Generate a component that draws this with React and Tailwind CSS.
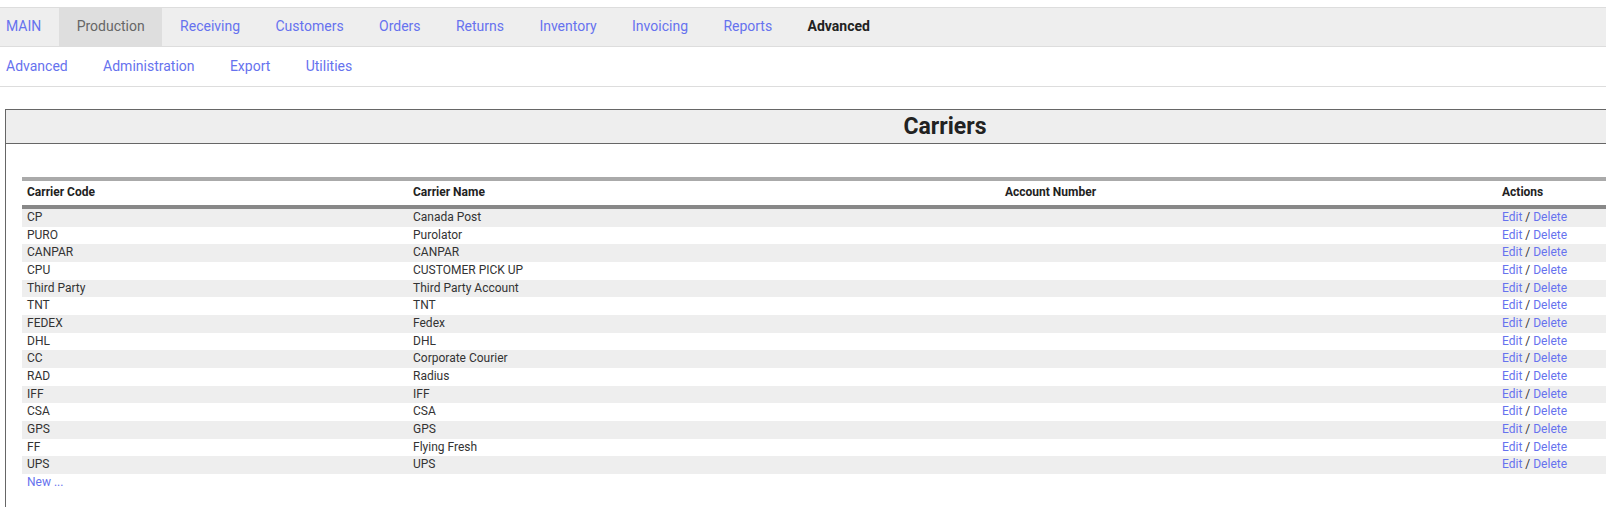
import React from "react";

const topNav = ["MAIN", "Production", "Receiving", "Customers", "Orders", "Returns", "Inventory", "Invoicing", "Reports", "Advanced"];
const subNav = ["Advanced", "Administration", "Export", "Utilities"];
const rows = [
  ["CP", "Canada Post"],
  ["PURO", "Purolator"],
  ["CANPAR", "CANPAR"],
  ["CPU", "CUSTOMER PICK UP"],
  ["Third Party", "Third Party Account"],
  ["TNT", "TNT"],
  ["FEDEX", "Fedex"],
  ["DHL", "DHL"],
  ["CC", "Corporate Courier"],
  ["RAD", "Radius"],
  ["IFF", "IFF"],
  ["CSA", "CSA"],
  ["GPS", "GPS"],
  ["FF", "Flying Fresh"],
  ["UPS", "UPS"],
];

const thCls = "border-t-[4px] border-b-[4px] border-t-[#aaaaaa] border-b-[#888888] px-[5px] p-0 text-left font-bold text-[#222222]";

export default function App() {
  return (
    <div className="w-screen overflow-hidden bg-white text-[#333]" style={{ fontFamily: "Roboto, 'Liberation Sans', sans-serif" }}>
      <div className="h-[7px]" />
      <div className="flex h-[40px] border-y border-[#dddddd] bg-[#eeeeee] text-[14px]">
        {topNav.map((t, i) => {
          let cls = "flex items-center px-[17.7px] pb-[2px] text-[#6672ee]";
          if (i === 0) cls = "flex items-center pl-[6px] pr-[17.7px] pb-[2px] text-[#6672ee]";
          if (t === "Production") cls = "flex items-center px-[17.7px] pb-[2px] bg-[#dedede] text-[#666666]";
          if (i === 9) cls = "flex items-center px-[17.7px] pb-[2px] font-bold text-[#222222]";
          return (
            <div key={i} className={cls}>
              {t}
            </div>
          );
        })}
      </div>
      <div className="flex h-[40px] border-b border-[#dddddd] text-[14px]">
        {subNav.map((t, i) => (
          <div key={i} className={i === 0 ? "flex items-center pl-[6px] pr-[17.7px] text-[#6672ee]" : "flex items-center px-[17.7px] text-[#6672ee]"}>
            {t}
          </div>
        ))}
      </div>
      <div className="pt-[22px] pl-[5px]">
        <div className="h-[420px] w-[1880px] border border-[#666666]">
          <div className="flex h-[34px] items-center justify-center border-b border-[#666666] bg-[#eeeeee] pt-[2px] text-[23px] font-bold text-[#222222]">
            Carriers
          </div>
          <div className="px-[16px] pt-[33px]">
            <table className="w-full border-separate border-spacing-0 text-[12px] leading-[17.65px]">
              <thead>
                <tr>
                  <th className={thCls + " w-[386px]"}>
                    <div className="flex h-[24px] items-center">Carrier Code</div>
                  </th>
                  <th className={thCls + " w-[592px]"}>
                    <div className="flex h-[24px] items-center">Carrier Name</div>
                  </th>
                  <th className={thCls + " w-[497px]"}>
                    <div className="flex h-[24px] items-center">Account Number</div>
                  </th>
                  <th className={thCls}>
                    <div className="flex h-[24px] items-center">Actions</div>
                  </th>
                </tr>
              </thead>
              <tbody>
                {rows.map((r, i) => (
                  <tr key={i} className={i % 2 === 0 ? "bg-[#eeeeee]" : "bg-white"}>
                    <td className="p-0 px-[5px]">{r[0]}</td>
                    <td className="p-0 px-[5px]">{r[1]}</td>
                    <td className="p-0 px-[5px]"></td>
                    <td className="p-0 px-[5px]">
                      <span className="text-[#6672ee]">Edit</span> / <span className="text-[#6672ee]">Delete</span>
                    </td>
                  </tr>
                ))}
                <tr>
                  <td className="p-0 px-[5px] text-[#6672ee]">New ...</td>
                  <td></td>
                  <td></td>
                  <td></td>
                </tr>
              </tbody>
            </table>
          </div>
        </div>
      </div>
    </div>
  );
}
